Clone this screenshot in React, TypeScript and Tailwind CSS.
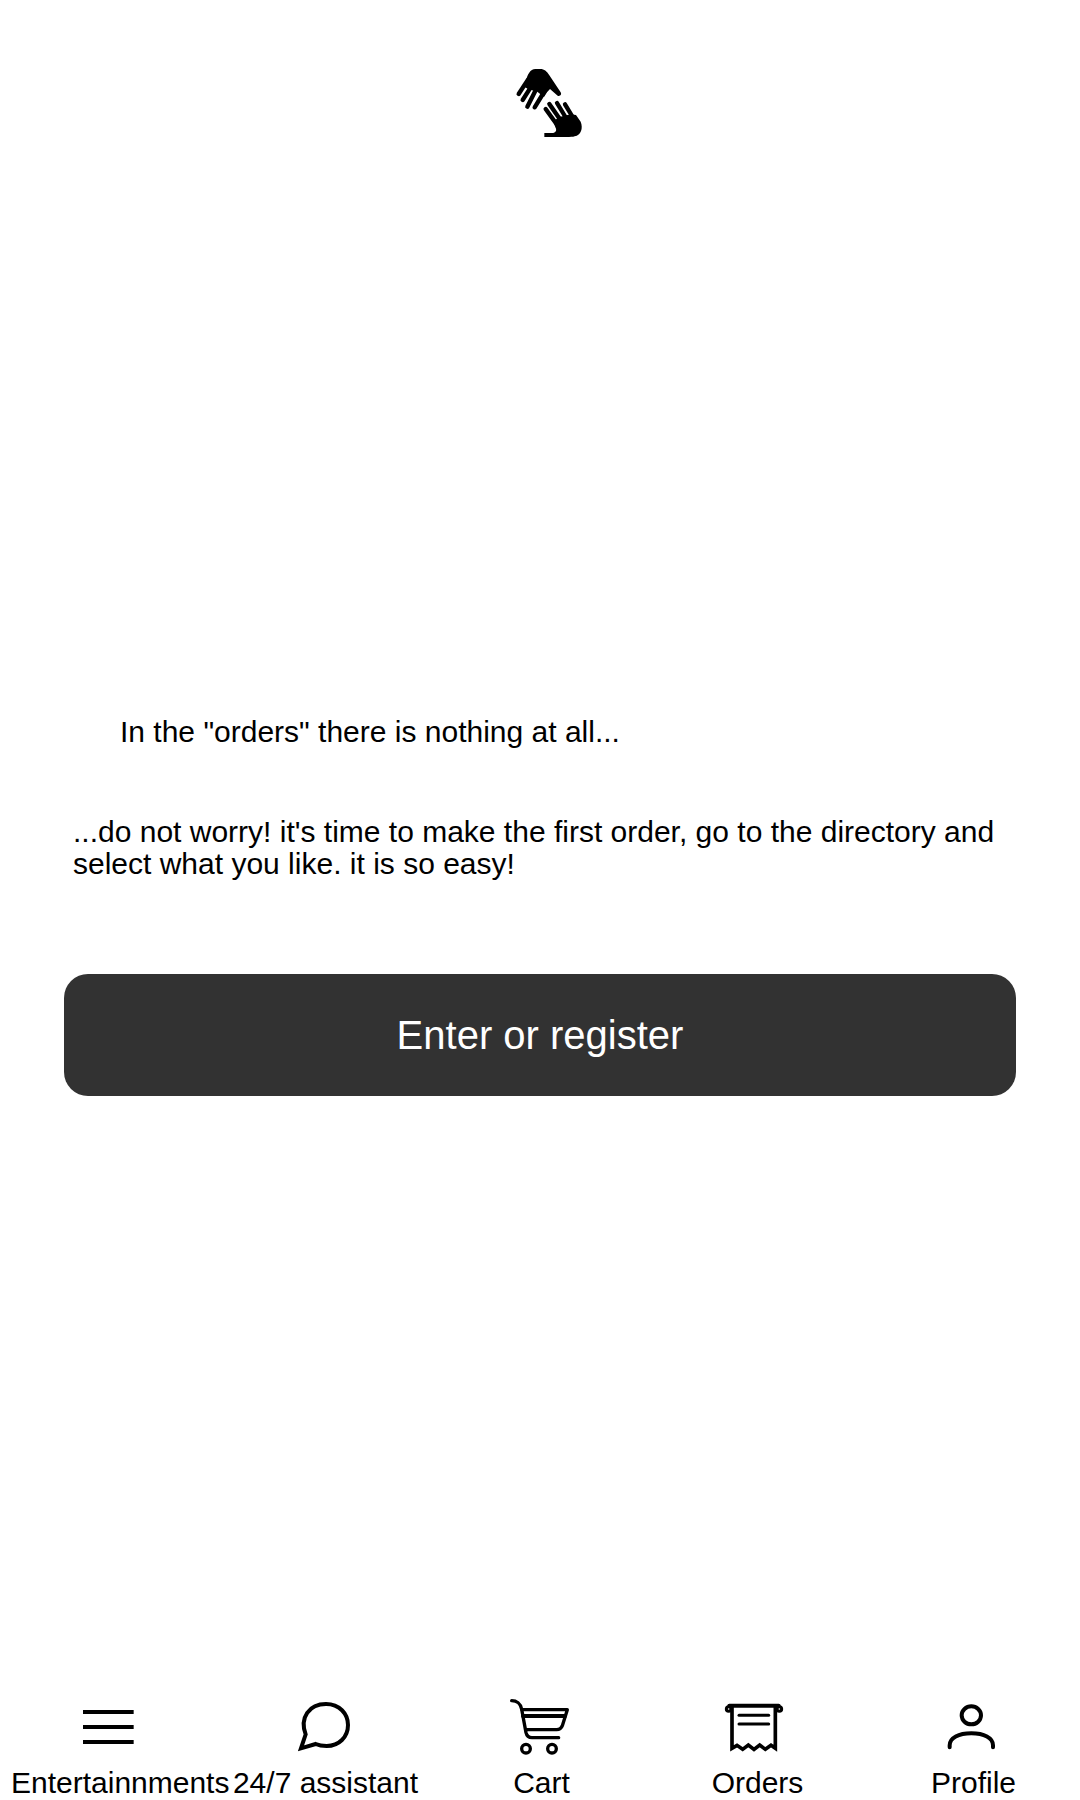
import type { ReactNode } from "react";

function HandsLogo() {
  return (
    <svg
      viewBox="24 27 240 240"
      className="size-20 text-black"
      fill="currentColor"
      stroke="currentColor"
      strokeLinecap="round"
      strokeLinejoin="round"
      role="img"
      aria-label="Helping hands"
    >
      <path
        stroke="none"
        d="M77 82C82 58 91 42 106 42H121C133 42 140 49 147 59L182 112C186 119 180 125 173 122L150 102L141 112L132 126L112 110L96 106L84 102L70 94Z"
      />
      <g strokeWidth="13" fill="none">
        <path d="M84 74L56 117" />
        <path d="M94 94L68 135" />
        <path d="M110 100L82 155" />
        <path d="M134 108L104 157" />
      </g>
      <path
        stroke="none"
        d="M133 234L160 234C168 232 171 226 166 217L160 199L178 186L194 182L212 178L228 180L242 200C250 220 243 240 224 244C219 246 210 246 200 246H133Z"
      />
      <g strokeWidth="13" fill="none">
        <path d="M137 162L170 208" />
        <path d="M148 147L182 196" />
        <path d="M171 144L200 192" />
        <path d="M195 148L218 186" />
      </g>
    </svg>
  );
}

function NavIcon({ viewBox, children }: { viewBox: string; children: ReactNode }) {
  return (
    <svg
      viewBox={viewBox}
      className="size-16 self-center text-black"
      fill="none"
      stroke="currentColor"
      strokeWidth="12"
      strokeLinecap="round"
      strokeLinejoin="round"
      aria-hidden="true"
    >
      {children}
    </svg>
  );
}

const items = [
  {
    label: "Entertainnments",
    icon: (
      <NavIcon viewBox="228 48 192 192">
        <g strokeLinecap="butt">
          <path d="M249 96H401" />
          <path d="M249 141H401" />
          <path d="M249 186H401" />
        </g>
      </NavIcon>
    ),
  },
  {
    label: "24/7 assistant",
    icon: (
      <NavIcon viewBox="186 48 192 192">
        <path
          strokeLinejoin="miter"
          d="M227 163C208 112 238 72 288 72C328 72 354 101 354 135C354 171 327 198 290 198C278 198 268 197 257 192L213 205L227 163Z"
        />
      </NavIcon>
    ),
  },
  {
    label: "Cart",
    icon: (
      <NavIcon viewBox="84 48 192 192">
        <g strokeWidth="10">
          <path d="M95 62C109 62 122 70 125 88L138 158C140 167 147 173 156 173H236" />
          <path d="M126 89H262L247 137C244 145 239 149 230 149H137" />
          <path d="M129 108H255" strokeWidth="12" />
          <circle cx="138" cy="206" r="13" />
          <circle cx="216" cy="206" r="13" />
        </g>
      </NavIcon>
    ),
  },
  {
    label: "Orders",
    icon: (
      <NavIcon viewBox="102 48 192 192">
        <path d="M118 77H266" />
        <g strokeWidth="9">
          <circle cx="116" cy="87" r="7" />
          <circle cx="268" cy="87" r="7" />
          <path d="M147 106H236" />
          <path d="M147 132H236" />
        </g>
        <path
          strokeWidth="11"
          strokeLinejoin="miter"
          d="M126 80V205L141 196L158 208L175 195L192 208L209 195L226 208L243 196L256 205V80"
        />
      </NavIcon>
    ),
  },
  {
    label: "Profile",
    icon: (
      <NavIcon viewBox="90 48 192 192">
        <ellipse cx="184" cy="106" rx="29" ry="27" />
        <path d="M119 202V196C119 174 146 160 184 160C222 160 249 174 249 196V202" />
      </NavIcon>
    ),
  },
];

export default function App() {
  return (
    <div className="flex min-h-screen flex-col bg-white font-['Liberation_Sans',Arial,sans-serif] text-[30px] leading-8 text-black">
      <header className="flex justify-center pt-16 pb-2 pl-4">
        <HandsLogo />
      </header>

      <main className="flex flex-1 flex-col justify-center px-16">
        <h1 className="px-14">In the "orders" there is nothing at all...</h1>
        <p className="mt-[68px] px-[9px]">
          ...do not worry! it's time to make the first order, go to the directory and select what
          you like. it is so easy!
        </p>
        <button
          type="button"
          className="mt-[94px] h-[122px] w-full rounded-3xl bg-[#323232] text-[40px] text-white"
        >
          Enter or register
        </button>
      </main>

      <nav className="grid grid-cols-5 pt-9">
        {items.map((item) => (
          <a
            key={item.label}
            href={"#" + item.label.toLowerCase().replace(/[^a-z0-9]+/g, "-")}
            className="flex min-w-0 flex-col"
          >
            {item.icon}
            <span className="mt-1.5 pr-2 pl-[11px] text-center leading-[34px] whitespace-nowrap">
              {item.label}
            </span>
          </a>
        ))}
      </nav>
    </div>
  );
}
